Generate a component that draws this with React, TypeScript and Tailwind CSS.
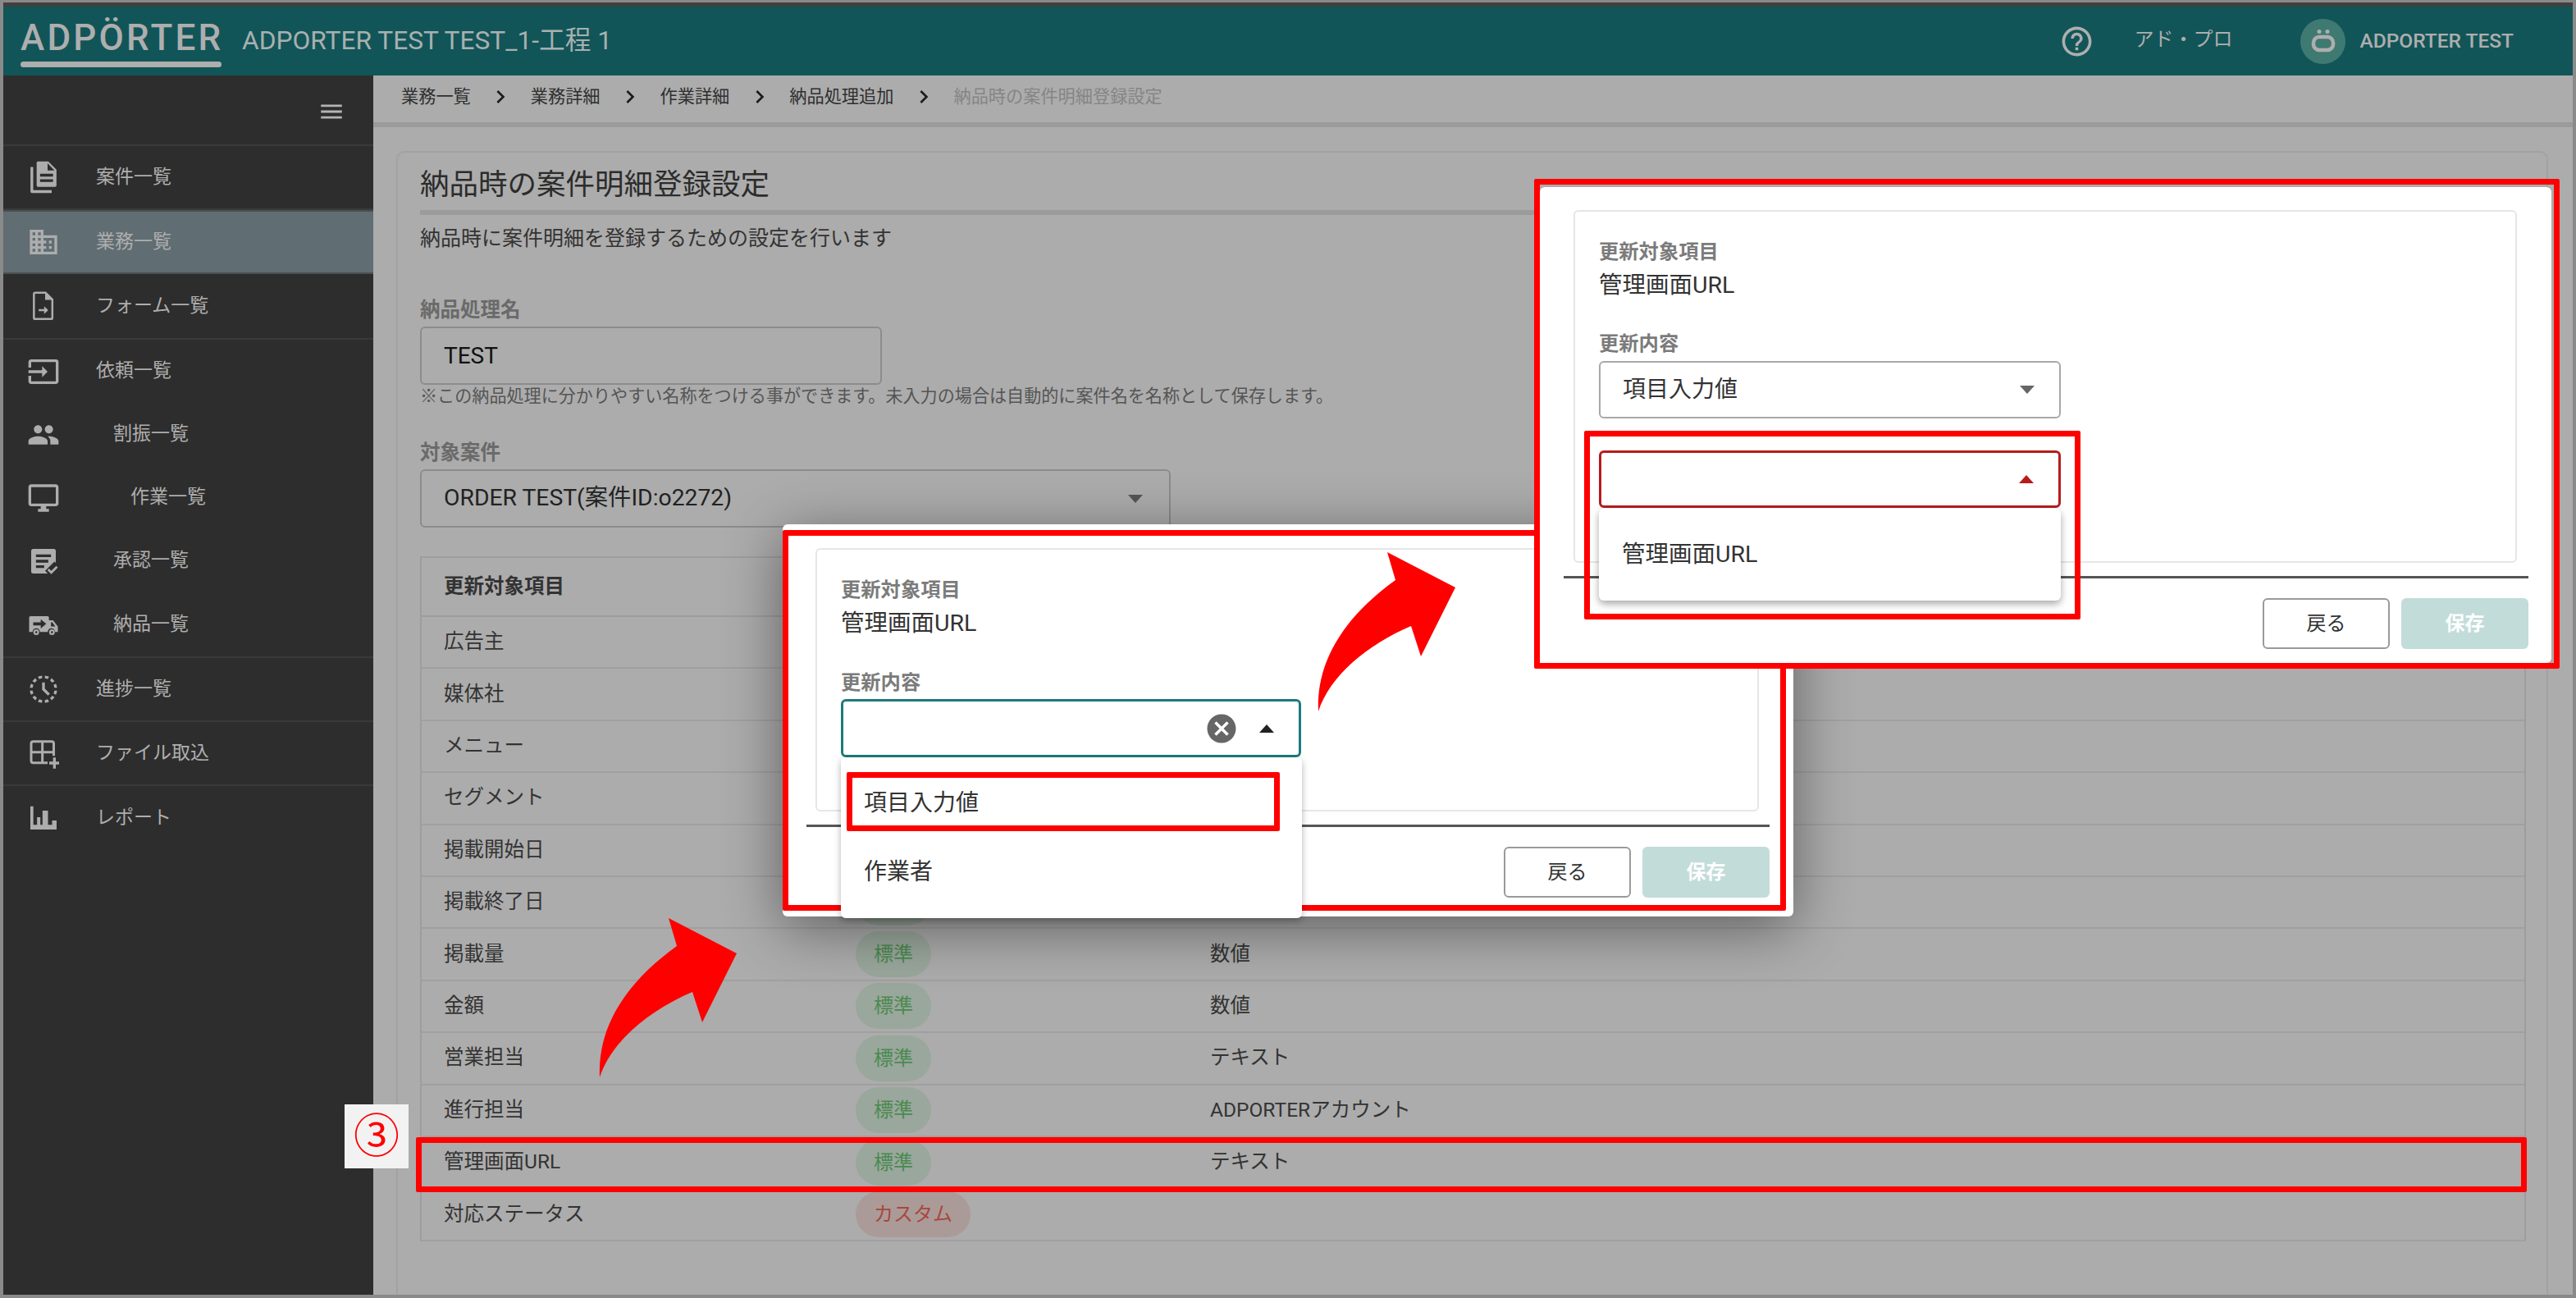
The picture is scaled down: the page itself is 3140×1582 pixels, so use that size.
import React from "react";
import {
  MdBusiness, MdCancel, MdChevronRight, MdOutlineDesktopWindows, MdHelpOutline, MdHistoryToggleOff, MdInput, MdMenu, MdPeople,
} from "react-icons/md";

const I = ({ children }: { children: React.ReactNode }) => (
  <svg width="40" height="40" viewBox="0 0 24 24" fill="#adadad">{children}</svg>
);

const DocsIcon = () => (
  <I>
    <path fillRule="evenodd" d="M8 .5h7.5l6 6V18a1 1 0 0 1-1 1H8a1 1 0 0 1-1-1V1.500a1 1 0 0 1 1-1zM15 1.800V7h5zM9.500 9.500v2h9.500v-2zM9.500 13.500v2h9.500v-2z" />
    <path d="M2.500 4.500h2v17h13.500v2H3.500a1 1 0 0 1-1-1z" />
  </I>
);
const FormIcon = () => (
  <I>
    <path fill="none" stroke="#adadad" strokeWidth="1.500" d="M6 2.200h7.500l5 5V20.500a1 1 0 0 1-1 1H6a1 1 0 0 1-1-1V3.200a1 1 0 0 1 1-1z" />
    <path d="M13.200 2.500v5h5z" />
    <path d="M8.500 14.200h4v-2l3 2.800-3 2.800v-2h-4z" />
  </I>
);
const ApproveIcon = () => (
  <I>
    <path fillRule="evenodd" d="M4.500 3h15a1.500 1.500 0 0 1 1.500 1.500v8.700l-1-.9-6.800 6.800 1.900 1.900H4.500A1.500 1.500 0 0 1 3 19.500v-15A1.500 1.500 0 0 1 4.500 3zM6.500 7v2h11V7zM6.500 11v2h9v-2zM6.500 15v2h6v-2z" />
    <path d="M14.800 18.600l1.200-1.200 1.700 1.700 3.600-3.600 1.200 1.200-4.800 4.800z" />
  </I>
);
const TruckIcon = () => (
  <I>
    <path fillRule="evenodd" d="M2.500 6h12.500a1 1 0 0 1 1 1v2h3l3.500 4.500V17.500h-2a2.700 2.700 0 0 0-5.400 0H9.400a2.700 2.700 0 0 0-5.400 0H1.500V7a1 1 0 0 1 1-1zM4.500 10.500v2.300h5.500v2.200l4-3.400-4-3.400v2.300zM17.500 10.500v3h3.200l-2.300-3z" />
    <path fillRule="evenodd" d="M6.700 15.600a2.100 2.100 0 1 1 0 4.200 2.100 2.100 0 0 1 0-4.200zm0 1.300a.8.8 0 1 0 0 1.600.8.8 0 0 0 0-1.600zM18.200 15.600a2.100 2.100 0 1 1 0 4.200 2.100 2.100 0 0 1 0-4.200zm0 1.300a.8.8 0 1 0 0 1.600.8.8 0 0 0 0-1.600z" />
  </I>
);
const TableAddIcon = () => (
  <I>
    <path fill="none" stroke="#adadad" strokeWidth="1.800" d="M19.500 14V5A1.500 1.500 0 0 0 18 3.500H4.500A1.500 1.500 0 0 0 3 5v12.500A1.500 1.500 0 0 0 4.500 19H15M3 11.200h16.500M11.200 3.500V19" />
    <path d="M19 15.200h2v3h2.400v2H21v3h-2v-3h-2.800v-2H19z" />
  </I>
);
const ReportIcon = () => (
  <I>
    <path d="M2.400 3.500h2.200V17h2.700v-5.600h2.400V17h1.600V6.600h4V17h3V13.800h3.300v6.600H2.400z" />
  </I>
);

const md = (C: React.ComponentType<{ size?: number; color?: string }>) => () => <C size={40} color="#adadad" />;

const NAV: { label: string; Icon: React.ComponentType; ml: string; h: string; sel?: boolean; line?: boolean }[] = [
  { label: "案件一覧", Icon: DocsIcon, ml: "ml-[44px]", h: "h-[78px]", line: true },
  { label: "業務一覧", Icon: md(MdBusiness), ml: "ml-[44px]", h: "h-[78px]", sel: true },
  { label: "フォーム一覧", Icon: FormIcon, ml: "ml-[44px]", h: "h-[80px]", line: true },
  { label: "依頼一覧", Icon: md(MdInput), ml: "ml-[44px]", h: "h-[77px]" },
  { label: "割振一覧", Icon: md(MdPeople), ml: "ml-[65px]", h: "h-[77px]" },
  { label: "作業一覧", Icon: md(MdOutlineDesktopWindows), ml: "ml-[86px]", h: "h-[77px]" },
  { label: "承認一覧", Icon: ApproveIcon, ml: "ml-[65px]", h: "h-[77px]" },
  { label: "納品一覧", Icon: TruckIcon, ml: "ml-[65px]", h: "h-[80px]", line: true },
  { label: "進捗一覧", Icon: md(MdHistoryToggleOff), ml: "ml-[44px]", h: "h-[78px]", line: true },
  { label: "ファイル取込", Icon: TableAddIcon, ml: "ml-[44px]", h: "h-[78px]", line: true },
  { label: "レポート", Icon: ReportIcon, ml: "ml-[44px]", h: "h-[78px]" },
];

const ROWS: [string, string, string][] = [
  ["広告主", "標準", "テキスト"],
  ["媒体社", "標準", "テキスト"],
  ["メニュー", "標準", "テキスト"],
  ["セグメント", "標準", "テキスト"],
  ["掲載開始日", "標準", "日付"],
  ["掲載終了日", "標準", "日付"],
  ["掲載量", "標準", "数値"],
  ["金額", "標準", "数値"],
  ["営業担当", "標準", "テキスト"],
  ["進行担当", "標準", "ADPORTERアカウント"],
  ["管理画面URL", "標準", "テキスト"],
  ["対応ステータス", "カスタム", ""],
];

const Tri = ({ up, color }: { up?: boolean; color: string }) => (
  <svg width="18" height="10" viewBox="0 0 18 10" fill={color}>
    {up ? <path d="M0 10 9 0l9 10z" /> : <path d="M0 0h18L9 10z" />}
  </svg>
);

const Crumb = ({ t, last }: { t: string; last?: boolean }) => (
  <>
    <span className={last ? "text-[#858585]" : "text-[#2f2f2f]"}>{t}</span>
    {!last && <MdChevronRight size={32} color="#1c1c1c" className="mx-[20.500px]" />}
  </>
);

const Arrow = ({ className }: { className: string }) => (
  <svg className={className} width="170" height="196" viewBox="0 0 170 196" fill="#ff0000">
    <path d="M1 195C-2 132 35 78 95 35L85 1l83 43-42 84-12-37C60 114 15 152 1 195z" />
  </svg>
);

const Buttons = () => (
  <div className="flex justify-end gap-[14px]">
    <div className="w-[155px] h-[62px] flex items-center justify-center rounded-[6px] border-2 border-[#9a9a9a] bg-white text-[24px] text-[#333]">戻る</div>
    <div className="w-[155px] h-[62px] flex items-center justify-center rounded-[6px] bg-[#c2dcda] text-[24px] font-bold text-white">保存</div>
  </div>
);

export default function App() {
  return (
    <div className="relative w-[3140px] h-[1582px] overflow-hidden bg-[#acacac] font-[Roboto,'Noto_Sans_CJK_JP',sans-serif] border-x-4 border-b-[4px] border-[#8a8a8a] border-t-[3px]">
      <div className="h-[5px] bg-[#404040]" />
      <header className="h-[84px] bg-[#125558] flex items-center text-[#aeaeae]">
        <div className="ml-[21px] w-[245px] flex flex-col items-stretch">
          <span className="text-[44px] leading-[42px] font-medium tracking-[3.200px] whitespace-nowrap mt-[6px]">ADPÖRTER</span>
          <span className="h-[7px] mt-[8px] rounded-full bg-[#aeaeae]" />
        </div>
        <span className="ml-[25px] text-[31.700px] text-[#a8b0b0]">ADPORTER TEST TEST_1-工程 1</span>
        <div className="ml-auto flex items-center">
          <MdHelpOutline size={43} color="#aeaeae" />
          <span className="ml-[48px] text-[24px] -mt-[4px]">アド・プロ</span>
          <span className="ml-[83px] w-[55px] h-[55px] rounded-full bg-[#3f7a72] flex items-center justify-center">
            <svg width="30" height="30" viewBox="0 0 30 30" fill="none" stroke="#aeaeae" strokeWidth="4.500">
              <rect x="3" y="10" width="24" height="16" rx="7" />
              <circle cx="10" cy="3.500" r="2.500" fill="#aeaeae" stroke="none" />
              <circle cx="20" cy="3.500" r="2.500" fill="#aeaeae" stroke="none" />
            </svg>
          </span>
          <span className="ml-[17px] mr-[72px] text-[24.500px] font-medium">ADPORTER TEST</span>
        </div>
      </header>

      <div className="flex h-[1487px]">
        <aside className="w-[451px] shrink-0 bg-[#2d2d2d] text-[#aeaeae] text-[23px]">
          <div className="h-[86px] flex justify-end items-start pt-[27px] pr-[34px] border-b-2 border-[#3a3a3a]">
            <MdMenu size={34} color="#b4b4b4" />
          </div>
          {NAV.map(({ label, Icon, ml, h, sel, line }) => (
            <div key={label} className={`flex items-center pl-[29px] ${h} ${sel ? "bg-[#606d73] border-y-2 border-[#4a4f52]" : ""} ${line ? "border-b-2 border-[#3a3a3a]" : ""}`}>
              <span className="w-[40px] h-[40px] flex items-center justify-center"><Icon /></span>
              <span className={ml}>{label}</span>
            </div>
          ))}
        </aside>

        <main className="flex-1 min-w-0">
          <div className="h-[63px] flex items-center pl-[34px] pb-[6px] border-b-[6px] border-[#9b9b9b] text-[21.200px]">
            <Crumb t="業務一覧" />
            <Crumb t="業務詳細" />
            <Crumb t="作業詳細" />
            <Crumb t="納品処理追加" />
            <Crumb t="納品時の案件明細登録設定" last />
          </div>
          <div className="ml-[28px] mr-[30px] mt-[29px] h-[1500px] rounded-t-[10px] border-2 border-[#9fa3a3] pl-[27px] pr-[25px] pt-[19px]">
            <h1 className="text-[35.500px] leading-[40px] text-[#2c2c2c]">納品時の案件明細登録設定</h1>
            <div className="mt-[11px] h-[6px] bg-[#9b9b9b]" />
            <p className="mt-[14px] text-[25px] leading-[30px] text-[#333]">納品時に案件明細を登録するための設定を行います</p>

            <div className="mt-[57px] text-[24.500px] leading-[30px] font-bold text-[#6a6a6a]">納品処理名</div>
            <div className="mt-[5px] w-[563px] h-[71px] flex items-center pl-[27px] rounded-[6px] border-2 border-[#8c8c8c] text-[28px] text-[#111]">TEST</div>
            <div className="mt-[3px] text-[21.100px] leading-[22px] text-[#555] whitespace-nowrap">※この納品処理に分かりやすい名称をつける事ができます。未入力の場合は自動的に案件名を名称として保存します。</div>

            <div className="mt-[43px] text-[24.500px] leading-[30px] font-bold text-[#6a6a6a]">対象案件</div>
            <div className="mt-[5px] w-[915px] h-[71px] flex items-center justify-between pl-[27px] pr-[32px] rounded-[6px] border-2 border-[#8c8c8c] text-[28.300px] text-[#222]">
              <span>ORDER TEST(案件ID:o2272)</span>
              <Tri color="#555" />
            </div>

            <div className="mt-[35px] border-2 border-[#9d9d9d] border-b-0">
              <div className="h-[72px] flex items-center pl-[27px] border-b-2 border-[#9d9d9d] text-[24.500px] font-bold text-[#333]">更新対象項目</div>
              {ROWS.map(([name, kind, type]) => (
                <div key={name} className="h-[63.400px] flex items-center pl-[27px] border-b-2 border-[#a0a0a0] text-[24.500px] text-[#333]">
                  <span className="w-[502px] shrink-0">{name}</span>
                  <span className="w-[432px] shrink-0 flex">
                    <span className={`h-[56px] px-[22px] flex items-center rounded-full text-[24px] ${kind === "標準" ? "bg-[#9aa79c] text-[#4a8a50]" : "bg-[#ab9b98] text-[#a8473c]"}`}>{kind}</span>
                  </span>
                  <span>{type}</span>
                </div>
              ))}
            </div>
          </div>
        </main>
      </div>

      {/* row annotation */}
      <div className="absolute left-[503px] top-[1383px] w-[2573px] h-[67px] rounded-[2px] border-[7px] border-[#ff0000]" />
      <div className="absolute left-[416px] top-[1343px] w-[78px] h-[78px] bg-[#f2f2f2] flex items-center justify-center text-[56px] leading-none text-[#ff0000]">③</div>
      <Arrow className="absolute left-[726px] top-[1115px]" />

      {/* first dialog */}
      <div className="absolute left-[950px] top-[636px] w-[1232px] h-[478px] rounded-[6px] bg-white pt-[29px] pl-[40px] pr-[42px] shadow-[0_14px_70px_rgba(0,0,0,0.45)]">
        <div className="h-[321px] rounded-[6px] border-2 border-[#e6e6e6] pl-[29px] pt-[34px]">
          <div className="text-[24.300px] leading-[30px] font-bold text-[#7b7b7b]">更新対象項目</div>
          <div className="mt-[8px] text-[28.500px] leading-[36px] text-[#333]">管理画面URL</div>
          <div className="mt-[39px] text-[24.300px] leading-[30px] font-bold text-[#7b7b7b]">更新内容</div>
          <div className="relative mt-[5px] w-[561px] h-[71px] flex items-center justify-end pr-[30px] rounded-[6px] border-[3px] border-[#1f7a7c]">
            <MdCancel size={42} color="#666" className="mr-[25px]" />
            <Tri up color="#222" />
            <div className="absolute -left-[3px] top-[68px] w-[562px] h-[196px] rounded-[6px] bg-white pt-[14px] pl-[28px] text-[28px] text-[#333] shadow-[0_3px_8px_rgba(0,0,0,0.3)] z-10">
              <div className="h-[84px] flex items-center">項目入力値</div>
              <div className="h-[84px] flex items-center">作業者</div>
              <div className="absolute left-[7px] top-[18px] w-[528px] h-[72px] rounded-[2px] border-[7px] border-[#ff0000]" />
            </div>
          </div>
        </div>
        <div className="mt-[16px] -ml-[11px] -mr-[13px] h-[3px] bg-[#555]" />
        <div className="mt-[24px] -mr-[13px]"><Buttons /></div>
      </div>
      <div className="absolute left-[950px] top-[643px] w-[1223px] h-[464px] rounded-[2px] border-[7px] border-[#ff0000]" />
      <Arrow className="absolute left-[1602px] top-[669px]" />

      {/* second dialog */}
      <div className="absolute left-[1873px] top-[225px] w-[1233px] h-[580px] rounded-[6px] bg-white pt-[28px] pl-[41px] pr-[42px]">
        <div className="h-[430px] rounded-[6px] border-2 border-[#e6e6e6] pl-[29px] pt-[34px]">
          <div className="text-[24.300px] leading-[30px] font-bold text-[#7b7b7b]">更新対象項目</div>
          <div className="mt-[8px] text-[28.500px] leading-[36px] text-[#333]">管理画面URL</div>
          <div className="mt-[38px] text-[24.300px] leading-[30px] font-bold text-[#7b7b7b]">更新内容</div>
          <div className="mt-[6px] w-[563px] h-[70px] flex items-center justify-between pl-[27px] pr-[30px] rounded-[6px] border-2 border-[#a8a8a8] text-[28px] text-[#333]">
            <span>項目入力値</span>
            <Tri color="#666" />
          </div>
          <div className="relative mt-[39px] w-[563px] h-[70px] flex items-center justify-end pr-[30px] rounded-[6px] border-[3px] border-[#b71c1c]">
            <Tri up color="#b71c1c" />
            <div className="absolute -left-[3px] top-[68px] w-[563px] h-[112px] flex items-center pl-[28px] rounded-[6px] bg-white text-[28.500px] text-[#333] shadow-[0_4px_10px_rgba(0,0,0,0.35)] z-10">管理画面URL</div>
          </div>
        </div>
        <div className="mt-[16px] -ml-[12px] -mr-[14px] h-[3px] bg-[#555]" />
        <div className="mt-[24px] -mr-[14px]"><Buttons /></div>
      </div>
      <div className="absolute left-[1927px] top-[522px] w-[605px] h-[230px] rounded-[2px] border-[7px] border-[#ff0000] z-20" />
      <div className="absolute left-[1866px] top-[215px] w-[1250px] h-[597px] rounded-[2px] border-[7px] border-[#ff0000] z-20" />
    </div>
  );
}
